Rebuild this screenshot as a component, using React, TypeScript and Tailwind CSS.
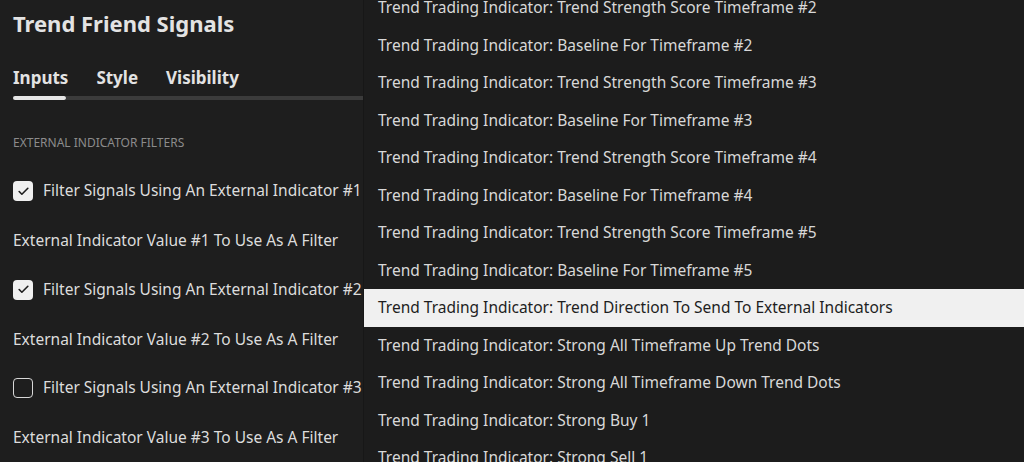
import { Check } from 'lucide-react'

const items = [
  'Trend Trading Indicator: Trend Strength Score Timeframe #2',
  'Trend Trading Indicator: Baseline For Timeframe #2',
  'Trend Trading Indicator: Trend Strength Score Timeframe #3',
  'Trend Trading Indicator: Baseline For Timeframe #3',
  'Trend Trading Indicator: Trend Strength Score Timeframe #4',
  'Trend Trading Indicator: Baseline For Timeframe #4',
  'Trend Trading Indicator: Trend Strength Score Timeframe #5',
  'Trend Trading Indicator: Baseline For Timeframe #5',
  'Trend Trading Indicator: Trend Direction To Send To External Indicators',
  'Trend Trading Indicator: Strong All Timeframe Up Trend Dots',
  'Trend Trading Indicator: Strong All Timeframe Down Trend Dots',
  'Trend Trading Indicator: Strong Buy 1',
  'Trend Trading Indicator: Strong Sell 1',
]

const filters = [
  { n: 1, checked: true },
  { n: 2, checked: true },
  { n: 3, checked: false },
]

export default function App() {
  return (
    <div className="relative h-[462px] w-[1024px] overflow-hidden bg-[#1e1e1e] font-['Noto_Sans',sans-serif] text-[#dcdcdc]">
      {/* Settings panel */}
      <div className="w-[363px] pl-[13px]">
        <h1 className="pt-[7px] text-[22px] font-bold leading-[32px] text-[#e3e3e3]">Trend Friend Signals</h1>
        <div className="mt-[27px] flex gap-[28px] text-[17px] font-bold leading-[24px] text-[#e3e3e3]">
          <span>Inputs</span>
          <span>Style</span>
          <span>Visibility</span>
        </div>
        <div className="mt-[6px] flex h-[4px]">
          <div className="w-[53px] rounded-full bg-[#e6e6e6]" />
          <div className="flex-1 bg-[#3b3b3b]" />
        </div>
        <div className="mt-[35px] text-[12px] uppercase leading-[16px] text-[#8c8c8c]">External indicator filters</div>

        <div className="mt-[28px] flex flex-col">
          {filters.map((f) => (
            <div key={f.n} className="flex flex-col">
              <div className="flex h-[24px] items-center gap-[10px]">
                {f.checked ? (
                  <div className="flex h-[20px] w-[20px] shrink-0 items-center justify-center rounded-[4px] bg-[#f0f0f0]">
                    <Check size={13} strokeWidth={3} color="#1e1e1e" />
                  </div>
                ) : (
                  <div className="h-[20px] w-[20px] shrink-0 rounded-[4px] border-[1.5px] border-[#d8d8d8]" />
                )}
                <span className="whitespace-nowrap text-[15.5px]">Filter Signals Using An External Indicator #{f.n}</span>
              </div>
              <div className="mt-[25px] mb-[25.5px] h-[24px] whitespace-nowrap text-[15.5px] leading-[24px]">
                External Indicator Value #{f.n} To Use As A Filter
              </div>
            </div>
          ))}
        </div>
      </div>

      {/* Dropdown menu */}
      <div className="absolute top-0 right-0 bottom-0 left-[363px] border-l border-[#171717] bg-[#1c1c1c]">
        <div className="-mt-[11px] flex flex-col">
          {items.map((t, i) => (
            <div
              key={i}
              className={
                i === 8
                  ? 'flex h-[37.5px] items-center bg-[#f0f0f0] pl-[14px] text-[15.5px] whitespace-nowrap text-[#1e1e1e]'
                  : 'flex h-[37.5px] items-center pl-[14px] text-[15.5px] whitespace-nowrap text-[#d8d8d8]'
              }
            >
              {t}
            </div>
          ))}
        </div>
      </div>
    </div>
  )
}
